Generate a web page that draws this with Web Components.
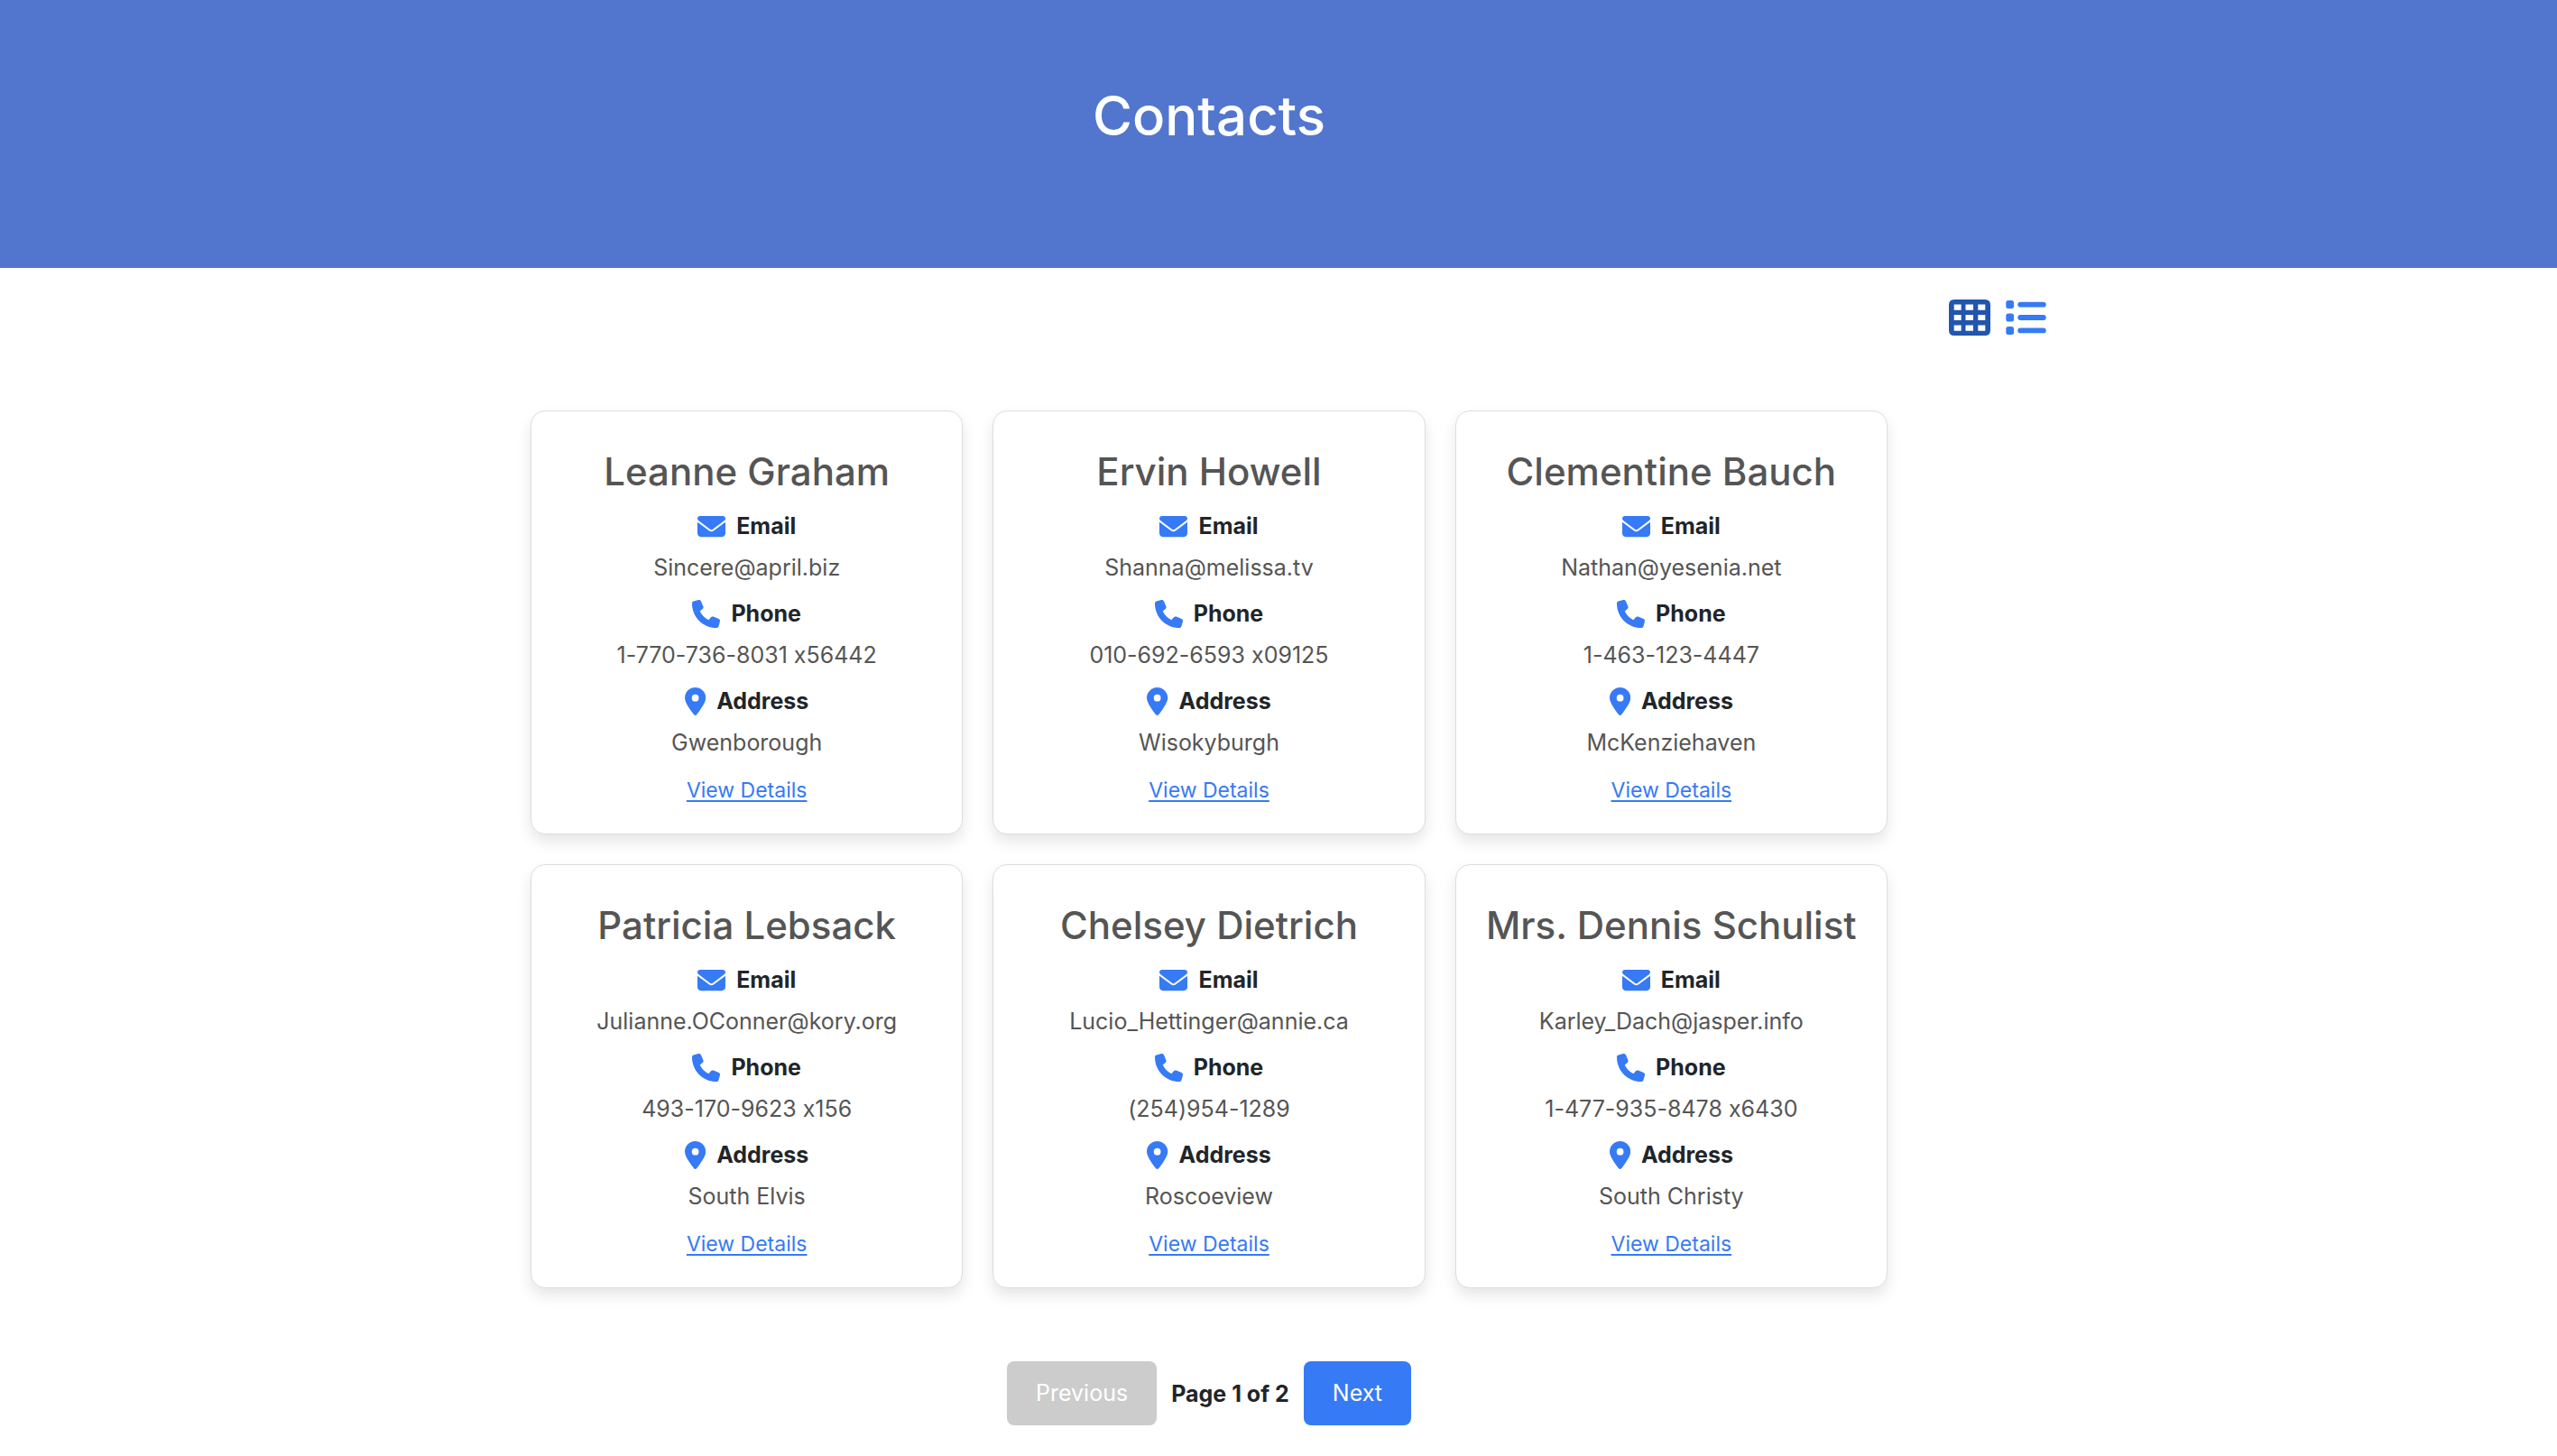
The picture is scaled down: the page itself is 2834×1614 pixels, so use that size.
<!DOCTYPE html>
<html lang="en">
<head>
<meta charset="utf-8">
<title>Contacts</title>
<style>
  body {
    margin: 0;
    background: #fff;
    color: #212529;
    font: 25px/40px Inter, "Liberation Sans", sans-serif;
    font-feature-settings: "calt" 0;
    --primary: #367af6;
    --primary-dark: #2155ae;
    --muted: #555;
    --offset: 154px;
  }
</style>
</head>
<body>
<contacts-app></contacts-app>

<script>
const ICONS = {
  email: ['0 0 512 512', '<path d="M48 64C21.500 64 0 85.500 0 112c0 15.100 7.100 29.300 19.200 38.400L236.800 313.600c11.400 8.500 27 8.500 38.400 0L492.800 150.400c12.100-9.100 19.200-23.300 19.200-38.400c0-26.500-21.500-48-48-48H48zM0 176V384c0 35.300 28.700 64 64 64H448c35.300 0 64-28.700 64-64V176L294.400 339.200c-22.800 17.100-54 17.100-76.800 0L0 176z"/>'],
  phone: ['0 0 512 512', '<path d="M164.900 24.600c-7.700-18.600-28-28.500-47.400-23.200l-88 24C12.100 30.200 0 46 0 64C0 311.400 200.600 512 448 512c18 0 33.800-12.100 38.600-29.500l24-88c5.300-19.400-4.600-39.700-23.200-47.400l-96-40c-16.300-6.800-35.200-2.100-46.300 11.600L304.700 368C234.300 334.700 177.300 277.700 144 207.300L193.300 167c13.700-11.200 18.400-30 11.600-46.300l-40-96z"/>'],
  address: ['0 0 384 512', '<path d="M215.700 499.200C267 435 384 279.400 384 192C384 86 298 0 192 0S0 86 0 192c0 87.400 117 243 168.300 307.200c12.300 15.300 35.100 15.300 47.400 0zM192 128a64 64 0 1 1 0 128 64 64 0 1 1 0-128z"/>'],
  grid: ['0 0 46 40', '<path fill-rule="evenodd" d="M6 0H40Q46 0 46 6V34Q46 40 40 40H6Q0 40 0 34V6Q0 0 6 0ZM5.700 5.500V11.700H13.700V5.500ZM18.500 5.500V11.700H27V5.500ZM32.300 5.500V11.700H40.300V5.500ZM5.700 17V23H13.700V17ZM18.500 17V23H27V17ZM32.300 17V23H40.300V17ZM5.700 28.500V34.700H13.700V28.500ZM18.500 28.500V34.700H27V28.500ZM32.300 28.500V34.700H40.300V28.500Z"/>'],
  list: ['0 0 46 40', '<rect x="1.300" y="1" width="8.700" height="9" rx="2.500"/><rect x="1.300" y="15.500" width="8.700" height="9" rx="2.500"/><rect x="1.300" y="30" width="8.700" height="9" rx="2.500"/><rect x="14.300" y="2.700" width="31.400" height="5.800" rx="2.900"/><rect x="14.300" y="17.100" width="31.400" height="5.800" rx="2.900"/><rect x="14.300" y="31.500" width="31.400" height="5.800" rx="2.900"/>']
};

const CONTACTS = [
  ['Leanne Graham', 'Sincere@april.biz', '1-770-736-8031 x56442', 'Gwenborough'],
  ['Ervin Howell', 'Shanna@melissa.tv', '010-692-6593 x09125', 'Wisokyburgh'],
  ['Clementine Bauch', 'Nathan@yesenia.net', '1-463-123-4447', 'McKenziehaven'],
  ['Patricia Lebsack', 'Julianne.OConner@kory.org', '493-170-9623 x156', 'South Elvis'],
  ['Chelsey Dietrich', 'Lucio_Hettinger@annie.ca', '(254)954-1289', 'Roscoeview'],
  ['Mrs. Dennis Schulist', 'Karley_Dach@jasper.info', '1-477-935-8478 x6430', 'South Christy']
];

function define(name, render) {
  customElements.define(name, class extends HTMLElement {
    connectedCallback() {
      if (!this.shadowRoot) this.attachShadow({ mode: 'open' }).innerHTML = render(this);
    }
  });
}

define('app-icon', el => {
  const [box, shape] = ICONS[el.getAttribute('name')];
  return `<style>
    :host { display: block; height: 31px; }
    svg { display: block; height: 100%; fill: currentColor; }
  </style><svg viewBox="${box}" aria-hidden="true">${shape}</svg>`;
});

define('page-banner', () => `<style>
    :host { display: block; background: #5276cd; padding: 88px var(--offset) 129px 0; }
    h1 { margin: 0; color: #fff; font-size: 60px; line-height: 80px; font-weight: 500; text-align: center; }
  </style><h1><slot></slot></h1>`);

define('view-toggle', () => `<style>
    :host { display: flex; justify-content: flex-end; gap: 16px; padding: 35px calc(20% - 1px) 0 0; }
    button { border: 0; padding: 0; background: none; color: var(--primary); }
    button[aria-pressed="true"] { color: var(--primary-dark); }
    app-icon { height: 40px; }
  </style>
  <button aria-label="Grid view" aria-pressed="true"><app-icon name="grid"></app-icon></button>
  <button aria-label="List view" aria-pressed="false"><app-icon name="list"></app-icon></button>`);

define('contact-field', el => `<style>
    :host { display: block; margin-bottom: 11px; }
    .label { display: flex; align-items: center; justify-content: center; gap: 12px; font-weight: 700; margin-bottom: 6px; }
    app-icon { color: var(--primary); }
    .value { color: var(--muted); }
  </style>
  <div class="label"><app-icon name="${el.getAttribute('kind')}"></app-icon><span>${el.getAttribute('label')}</span></div>
  <div class="value"><slot></slot></div>`);

define('contact-card', () => `<style>
    :host { display: block; box-sizing: border-box; padding: 40px 16px 28px; text-align: center;
      background: #fff; border: 1px solid #ddd; border-radius: 16px; box-shadow: 0 8px 16px rgba(0, 0, 0, .1); }
    h2 { margin: 0 0 13px; color: var(--muted); font-size: 42px; line-height: 54px; font-weight: 500; white-space: nowrap; }
    a { display: block; width: fit-content; margin: 13px auto 0; color: var(--primary); font-size: 23px; text-decoration-thickness: 2px; text-underline-offset: 3px; }
  </style>
  <h2><slot name="name"></slot></h2>
  <slot></slot>
  <a href="#details">View Details</a>`);

define('contact-grid', () => `<style>
    :host { display: grid; grid-template-columns: repeat(3, minmax(0, 1fr)); gap: 33px; max-width: 1504px; margin: 0 auto; }
  </style>` + CONTACTS.map(([name, email, phone, city]) => `
  <contact-card>
    <span slot="name">${name}</span>
    <contact-field kind="email" label="Email">${email}</contact-field>
    <contact-field kind="phone" label="Phone">${phone}</contact-field>
    <contact-field kind="address" label="Address">${city}</contact-field>
  </contact-card>`).join(''));

define('page-nav', () => `<style>
    :host { display: flex; align-items: center; justify-content: center; gap: 16px; margin-top: 81px; }
    button { border: 0; border-radius: 8px; padding: 16px 32px; font: inherit; line-height: 39px; color: #fff; background: var(--primary); }
    button:disabled { background: #ccc; }
    span { font-weight: 700; }
  </style>
  <button disabled>Previous</button><span>Page 1 of 2</span><button>Next</button>`);

define('contacts-app', () => `<style>
    :host { display: block; }
    main { padding: 83px var(--offset) 32px 0; }
  </style>
  <page-banner>Contacts</page-banner>
  <view-toggle></view-toggle>
  <main><contact-grid></contact-grid><page-nav></page-nav></main>`);
</script>
</body>
</html>
